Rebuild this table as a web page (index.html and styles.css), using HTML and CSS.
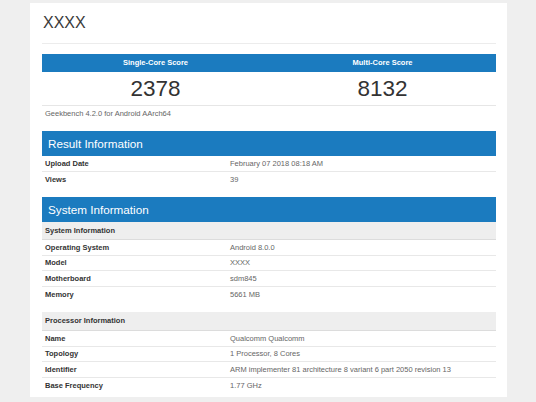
FILE: index.html
```html
<!DOCTYPE html>
<html>
<head>
<meta charset="utf-8">
<link rel="stylesheet" href="styles.css">
</head>
<body>
<div class="card">
  <div class="title">XXXX</div>
  <div class="scores">
    <div class="score">
      <div class="score-head">Single-Core Score</div>
      <div class="score-num">2378</div>
    </div>
    <div class="score">
      <div class="score-head">Multi-Core Score</div>
      <div class="score-num">8132</div>
    </div>
  </div>
  <div class="version">Geekbench 4.2.0 for Android AArch64</div>

  <div class="section">
    <div class="sec-head">Result Information</div>
    <div class="row"><span class="lbl">Upload Date</span><span class="val">February 07 2018 08:18 AM</span></div>
    <div class="row"><span class="lbl">Views</span><span class="val">39</span></div>
  </div>

  <div class="section">
    <div class="sec-head">System Information</div>
    <div class="sub-head">System Information</div>
    <div class="row"><span class="lbl">Operating System</span><span class="val">Android 8.0.0</span></div>
    <div class="row"><span class="lbl">Model</span><span class="val">XXXX</span></div>
    <div class="row"><span class="lbl">Motherboard</span><span class="val">sdm845</span></div>
    <div class="row"><span class="lbl">Memory</span><span class="val">5661 MB</span></div>
    <div class="sub-head sub-gap">Processor Information</div>
    <div class="row"><span class="lbl">Name</span><span class="val">Qualcomm Qualcomm</span></div>
    <div class="row"><span class="lbl">Topology</span><span class="val">1 Processor, 8 Cores</span></div>
    <div class="row"><span class="lbl">Identifier</span><span class="val">ARM implementer 81 architecture 8 variant 6 part 2050 revision 13</span></div>
    <div class="row"><span class="lbl">Base Frequency</span><span class="val">1.77 GHz</span></div>
  </div>
</div>
</body>
</html>
```

FILE: styles.css
```css
* { box-sizing: border-box; }
html, body { margin: 0; padding: 0; }
body {
  background: #efefef;
  font-family: "Liberation Sans", Arial, sans-serif;
  width: 536px;
  height: 402px;
  overflow: hidden;
}
.card {
  margin: 3px 0 0 30px;
  width: 477px;
  height: 394px;
  background: #fff;
  padding: 0 11px 4px 12px;
}
.title {
  font-size: 16px;
  line-height: 20px;
  color: #3a3a3a;
  padding: 10px 1px 10px 1px;
  border-bottom: 1px solid #ececec;
}
.scores {
  display: grid;
  grid-template-columns: 1fr 1fr;
  margin-top: 10px;
  border-bottom: 1px solid #e6e6e6;
}
.score { text-align: center; }
.score-head {
  background: #1b7bbf;
  color: #fff;
  font-weight: bold;
  font-size: 7.5px;
  height: 18px;
  line-height: 18px;
}
.score-num {
  font-size: 22.5px;
  line-height: 33px;
  height: 33px;
  color: #333;
}
.version {
  font-size: 7.5px;
  color: #666;
  line-height: 8px;
  padding: 4px 3px;
  margin-bottom: 9px;
}
.section { margin-bottom: 10px; }
.sec-head {
  background: #1b7bbf;
  color: #fff;
  font-size: 11.7px;
  height: 25px;
  line-height: 25px;
  padding-left: 6px;
}
.sub-head {
  background: #eeeeee;
  color: #333;
  font-weight: bold;
  font-size: 7.5px;
  height: 18px;
  line-height: 17px;
  padding-left: 3px;
  border-bottom: 1px solid #dcdcdc;
}
.sub-gap { margin-top: 10px; height: 19px; line-height: 18px; }
.row {
  display: grid;
  grid-template-columns: 185px 1fr;
  height: 15.5px;
  align-items: center;
  font-size: 7.5px;
  padding-left: 3px;
  border-bottom: 1px solid #e8e8e8;
}
.row:last-child, .row:has(+ .sub-head) { border-bottom: none; }
.lbl { font-weight: bold; color: #333; }
.val { color: #666; padding-left: 0; }
```
